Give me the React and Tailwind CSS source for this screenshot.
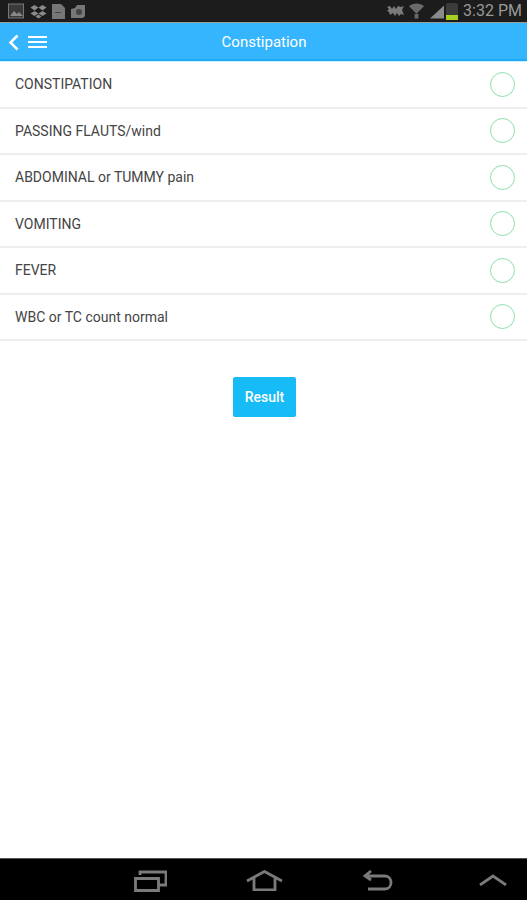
const rows = [
  "CONSTIPATION",
  "PASSING FLAUTS/wind",
  "ABDOMINAL or TUMMY pain",
  "VOMITING",
  "FEVER",
  "WBC or TC count normal",
];

function StatusBar() {
  return (
    <div className="h-[22px] bg-[#1c1c1c] flex items-center justify-between pl-2 pr-[5px]">
      <div className="flex items-center gap-[5px] text-[#6f6f6f]">
        <svg width="17" height="16" viewBox="0 0 17 16" fill="none">
          <rect x="0.5" y="1" width="15" height="14" fill="#3a3a3a" stroke="#777" />
          <path d="M2 13l4-5 3 3 2-2 4 4z" fill="#888" />
        </svg>
        <svg width="17" height="15" viewBox="0 0 17 15" fill="#8a8a8a">
          <path d="M4.500 1L8.500 3.500 4.500 6.500 0.500 3.500zM12.500 1L16.500 3.500 12.500 6.500 8.500 3.500zM4.500 7L8.500 9.500 4.500 12 0.500 9.500zM12.500 7L16.500 9.500 12.500 12 8.500 9.500zM8.500 10.500L11.500 12.500 8.500 14.500 5.500 12.500z" />
        </svg>
        <svg width="13" height="16" viewBox="0 0 13 16" fill="#777">
          <path d="M0 1h9l4 4v11H0z" />
          <rect x="3" y="9" width="6" height="1" fill="#444" />
        </svg>
        <svg width="17" height="16" viewBox="0 0 17 16" fill="#777">
          <path d="M1 6l4-1 2-3h8v11l-2 2H1z" />
          <circle cx="9" cy="9" r="3" fill="#444" />
        </svg>
      </div>
      <div className="flex items-center text-[#8f8f8f]">
        <svg width="17" height="12" viewBox="0 0 17 12" fill="#7a7a7a" className="mr-[5px]">
          <path d="M0 2l3-1 2 3 2-3 2 3 2-3 3 1 3-1-2 4 2 5-3-1-2 2-2-3-2 3-2-3-3 2-1-3-2-1 2-2z" />
        </svg>
        <svg width="15" height="17" viewBox="0 0 16 17" fill="#6a6a6a" className="mr-[6px]">
          <path d="M0 3C4-1 12-1 16 3L8 11z" />
          <rect x="6" y="11" width="4" height="5" />
        </svg>
        <svg width="14" height="15" viewBox="0 0 15 15" fill="#8a8a8a" className="mr-[2px]">
          <path d="M15 1v14H0z" />
        </svg>
        <div className="w-3 h-[17px] bg-[#3b3b3b] rounded-t-[2px] flex flex-col justify-end mr-[5px]">
          <div className="h-[5px] bg-[#a5d020]" />
        </div>
        <span className="text-base leading-none font-['Roboto',sans-serif] text-[#999]">3:32 PM</span>
      </div>
    </div>
  );
}

function Header() {
  return (
    <div className="relative h-[39px] bg-[#35b5fe] border-t border-[#9a9a9a] border-b-2 border-b-[#1eaafa] flex items-center pl-2 pt-[2px]">
      <svg width="11" height="17" viewBox="0 0 11 17" fill="none" stroke="#fff" strokeWidth="2.500">
        <path d="M9.500 1.500L2.500 8.500l7 7" />
      </svg>
      <div className="ml-[9px] w-[19px] flex flex-col gap-[3px]">
        <div className="h-[2px] bg-white" />
        <div className="h-[2px] bg-white" />
        <div className="h-[2px] bg-white" />
      </div>
      <div className="absolute inset-x-0 pl-px text-center text-white text-[15px] font-['Roboto',sans-serif]">Constipation</div>
    </div>
  );
}

function NavBar() {
  return (
    <div className="mt-auto h-[42px] bg-black border-t border-[#555] relative flex items-center">
      <svg width="33" height="23" viewBox="0 0 33 23" fill="none" stroke="#7a7a7a" strokeWidth="2.800" className="ml-[134px] mt-[1px]">
        <path d="M1.500 9.500h23v12h-23zM6 6V3h26v13h-7" />
      </svg>
      <svg width="37" height="21" viewBox="0 0 37 21" fill="none" stroke="#7a7a7a" strokeWidth="2.800" className="ml-[79px] mt-[1px]">
        <path d="M1 11L18.500 1.500 36 11M8 8v12h21V8" />
      </svg>
      <svg width="30" height="22" viewBox="0 0 30 22" fill="none" stroke="#7a7a7a" strokeWidth="2.800" className="ml-[80px] mt-[2px]">
        <path d="M8 1L2 6l6 4M2 6h20c8 0 8 13 0 13H5" />
      </svg>
      <svg width="28" height="12" viewBox="0 0 28 12" fill="none" stroke="#7a7a7a" strokeWidth="2.800" className="ml-[86px] mt-[1px]">
        <path d="M1 11L14 2l13 9" />
      </svg>
    </div>
  );
}

export default function App() {
  return (
    <div className="w-[527px] h-[900px] bg-white flex flex-col font-['Roboto',sans-serif] overflow-hidden">
      <StatusBar />
      <Header />
      <div className="h-px bg-[#cdeefa]" />
      {rows.map((r) => (
        <div key={r} className="h-[46.500px] shrink-0 border-b-2 border-[#eeeeee] flex items-center justify-between pl-[15px] pr-3">
          <span className="text-sm text-[#444]">{r}</span>
          <div className="w-[25px] h-[25px] rounded-full border border-[#8fe0a8]" />
        </div>
      ))}
      <div className="flex pl-[233px] pt-9">
        <button className="w-[63px] h-10 bg-[#17bbf5] rounded-[2px] text-white text-sm font-medium">Result</button>
      </div>
      <NavBar />
    </div>
  );
}
